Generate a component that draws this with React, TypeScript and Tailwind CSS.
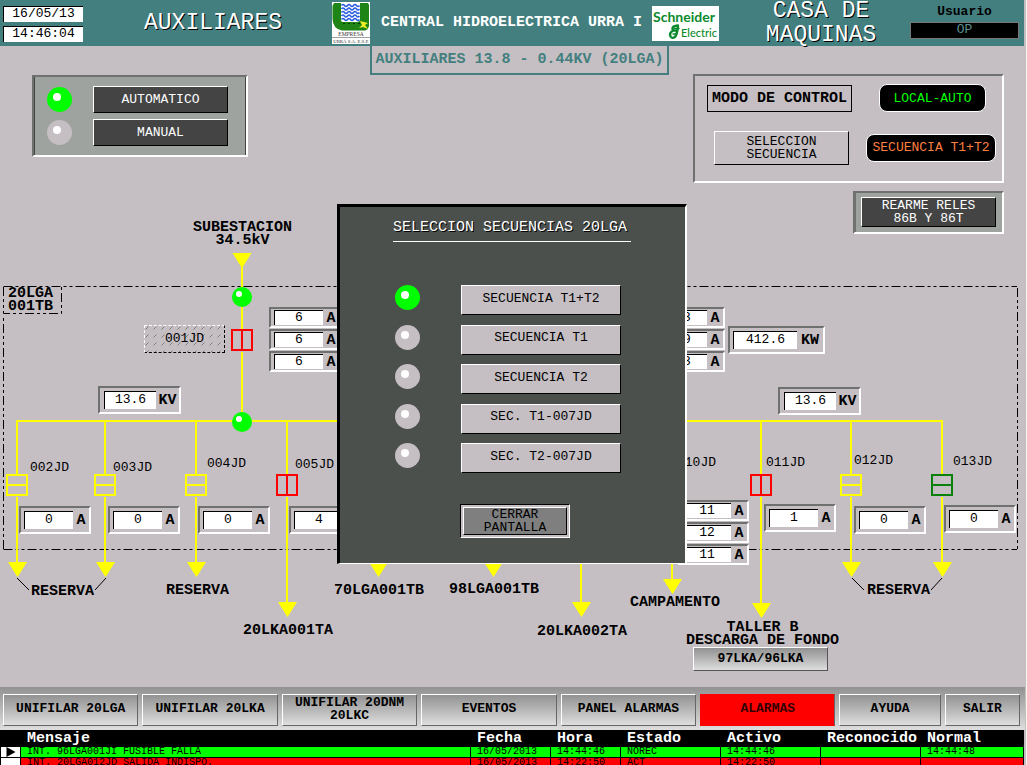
import React from 'react';
import clsx from 'clsx';

const HEADER_HEIGHT = 46;

/** Places a diagram node; y counts from the top of the screen. */
const at = (x: number, y: number) => ({ left: x, top: y - HEADER_HEIGHT });

const RAISED = 'border border-t-white border-l-white border-r-black border-b-black';
const SUNKEN_FRAME = 'border-2 border-t-[#6f716f] border-l-[#6f716f] border-r-white border-b-white';

function Lamp({ on = false }: { on?: boolean }) {
  return (
    <svg className="size-[25px] shrink-0" viewBox="0 0 25 25" aria-hidden="true">
      <circle cx="12.5" cy="12.5" r="12.5" fill={on ? '#00ff00' : '#c5bfc3'} />
      <circle cx="10" cy="10" r="4" fill="#fff" />
    </svg>
  );
}

/* ---------- header ---------- */

function UrraLogo() {
  return (
    <svg className="ml-[49px] h-[42px] w-[38px] shrink-0" viewBox="0 0 38 42" role="img" aria-label="Empresa Urrá">
      <rect width="38" height="42" fill="#fff" />
      <path d="M2 1H9V19H28V1H36L37 3V24Q36 28 33 28.500H10Q1 27 0.500 17V4Z" fill="#1e8416" />
      <path d="M9 1H28V18Q27 20 25 20H12Q9 20 9 18Z" fill="#fff" />
      <g fill="none" stroke="#2d5fe0" strokeWidth="1.600">
        {[3.5, 7, 10.5, 14, 17.5].map((y) => (
          <path key={y} d={`M9.500 ${y}q1.500 -2 3 0t3 0t3 0t3 0t3 0t3 0`} />
        ))}
      </g>
      <path d="M11 21.500H28" stroke="#0a3a06" strokeWidth="1" strokeDasharray="2 3" />
      <path d="M28 19L36 21L33 23L36 27L31 25L27 26L30 23Z" fill="#f2ee25" />
      <text x="19" y="34" textAnchor="middle" fontSize="5.500" fontFamily="Liberation Serif, serif" fill="#333">EMPRESA</text>
      <path d="M0 35.500H38" stroke="#888" strokeWidth="0.800" />
      <text x="19" y="41" textAnchor="middle" fontSize="4.800" fontFamily="Liberation Serif, serif" fill="#333">URRÁ S.A. E.S.P.</text>
    </svg>
  );
}

function SchneiderLogo() {
  return (
    <svg className="ml-[10px] h-[35px] w-[67px] shrink-0" viewBox="0 0 67 35" role="img" aria-label="Schneider Electric">
      <rect width="67" height="35" fill="#fff" />
      <text x="1" y="16" fontSize="14" fontWeight="700" fontFamily="Lato, sans-serif" fill="#0b8a2c">Schneider</text>
      <text x="29" y="31" fontSize="11" fontWeight="500" fontFamily="Lato, sans-serif" fill="#0b8a2c">Electric</text>
      <g fill="none" stroke="#0b8a2c" strokeLinecap="round">
        <path d="M26 19.500Q20 20 20.500 23Q21 25 24 24.500M20.500 25Q17 27 18.500 30.500Q20 33 23 31Q25 28 26 21" strokeWidth="2.400" />
        <path d="M22 22.500H27M21 28H25" strokeWidth="1.400" />
      </g>
    </svg>
  );
}

const TITLE = 'text-center text-[23px] leading-6 text-white [text-shadow:1px_1px_0_#000]';

function Header() {
  return (
    <header className="mr-0.5 flex h-[46px] items-center bg-[#437f7f]">
      <div className="ml-[3px] flex w-20 shrink-0 flex-col gap-1 pt-0.5 text-center">
        <time className="h-4 border-t border-l border-black bg-white leading-[13px]">16/05/13</time>
        <time className="h-4 border-t border-l border-black bg-white leading-[13px]">14:46:04</time>
      </div>
      <h1 className={clsx(TITLE, 'ml-[60px] w-[140px]')}>AUXILIARES</h1>
      <UrraLogo />
      <p className="ml-[11px] shrink-0 text-[15px] leading-4 font-bold whitespace-nowrap text-white">
        CENTRAL HIDROELECTRICA URRA I
      </p>
      <SchneiderLogo />
      <h2 className={clsx(TITLE, 'ml-[42px] w-[120px]')}>CASA DE MAQUINAS</h2>
      <div className="mr-[5px] ml-auto w-[109px] self-start pt-[5px] text-center">
        <p className="h-[17px] leading-[14px] font-bold">Usuario</p>
        <p className="h-[17px] border border-[#777] bg-black leading-[14px] text-[#5a8f8f]">OP</p>
      </div>
    </header>
  );
}

/* ---------- control panels ---------- */

const DARK_BUTTON = clsx(RAISED, 'w-[135px] bg-[#444] text-center leading-[13px] text-white');

function ModePanel() {
  return (
    <section className={clsx(SUNKEN_FRAME, 'mt-[29px] w-[216px] bg-[#9fa39f] shadow-[inset_1px_0_#444,inset_-1px_0_#444]')}>
      <div className="flex flex-col gap-1.5 py-[9px] pl-[13px]">
        <div className="flex items-center gap-[21px]">
          <Lamp on />
          <button className={clsx(DARK_BUTTON, 'h-[27px]')}>AUTOMATICO</button>
        </div>
        <div className="flex items-center gap-[21px]">
          <Lamp />
          <button className={clsx(DARK_BUTTON, 'h-[27px]')}>MANUAL</button>
        </div>
      </div>
    </section>
  );
}

function ControlPanel() {
  return (
    <div className="mt-7 ml-auto flex w-[311px] flex-col items-end gap-2">
      <section className={clsx(SUNKEN_FRAME, 'flex h-[109px] w-full flex-col gap-[19px] py-2')}>
        <div className="flex items-center justify-between pr-4 pl-3">
          <p className="h-[27px] w-[145px] border border-black text-center text-[15px] leading-[25px] font-bold">
            MODO DE CONTROL
          </p>
          <p className="h-7 w-[107px] rounded-lg border border-white bg-black text-center leading-[27px] text-[#00ff00]">
            LOCAL-AUTO
          </p>
        </div>
        <div className="flex items-center justify-between pr-1.5 pl-[19px]">
          <button className={clsx(RAISED, 'h-[34px] w-[135px] text-center leading-[13px]')}>
            SELECCION
            <br />
            SECUENCIA
          </button>
          <p className="h-7 w-[130px] rounded-lg border border-white bg-black text-center leading-[25px] text-[#ff7f3f]">
            SECUENCIA T1+T2
          </p>
        </div>
      </section>
      <section className={clsx(SUNKEN_FRAME, 'flex h-[43px] w-[151px] justify-center bg-[#9fa39f] pt-1 shadow-[inset_1px_0_#6f716f]')}>
        <button className={clsx(DARK_BUTTON, 'h-[30px]')}>
          REARME RELES
          <br />
          86B Y 86T
        </button>
      </section>
    </div>
  );
}

/* ---------- single-line diagram ---------- */

type Feeder = {
  x: number;
  arrowY: number;
  breaker?: { color: string; closed: boolean };
};

const YELLOW = '#ffff00';
const open = { color: YELLOW, closed: false };
const tripped = { color: '#ff0000', closed: true };

const feeders: Feeder[] = [
  { x: 17, arrowY: 562, breaker: open },
  { x: 105, arrowY: 562, breaker: open },
  { x: 196, arrowY: 562, breaker: open },
  { x: 287, arrowY: 602, breaker: tripped },
  { x: 378, arrowY: 562 },
  { x: 493, arrowY: 562 },
  { x: 581, arrowY: 602 },
  { x: 672, arrowY: 579 },
  { x: 761, arrowY: 603, breaker: tripped },
  { x: 851, arrowY: 562, breaker: open },
  { x: 942, arrowY: 562, breaker: { color: '#0a800a', closed: false } },
];

const Arrow = ({ x, y }: { x: number; y: number }) => (
  <path d={`M${x - 9.5} ${y}h19l-7.500 12l-2 3l-2 -3z`} fill={YELLOW} />
);

const Breaker = ({ x, y, color, closed }: { x: number; y: number; color: string; closed: boolean }) => (
  <g fill="#c5bfc3" stroke={color} strokeWidth="2">
    <rect x={x - 10} y={y - 10} width="20" height="20" />
    <path d={closed ? `M${x} ${y - 10}v20` : `M${x - 10} ${y}h20`} />
    <path d={`M${x - 2} ${y + 11.5}h4`} stroke="#c5bfc3" strokeWidth="1" />
  </g>
);

const Node = ({ x, y }: { x: number; y: number }) => (
  <g>
    <circle cx={x} cy={y} r="10" fill="#00ff00" />
    <circle cx={x - 3} cy={y - 3} r="3" fill="#fff" />
  </g>
);

function Wiring() {
  return (
    <svg className="absolute top-0 left-0 h-[641px] w-[1024px]" viewBox="0 46 1024 641" aria-hidden="true">
      <g fill="none" stroke="#000" strokeDasharray="9 3 3 3 3 3">
        <path d="M3.500 286.500H1017" />
        <path d="M1017.500 288V549" />
        <path d="M3.500 549.500H1017" />
        <path d="M3.500 549V315" />
        <path d="M3.500 287V313.500H61.500V287" />
      </g>
      <g stroke={YELLOW} strokeWidth="2" fill="none">
        <path d="M242 266V421" />
        <path d="M16 421H943" />
        {feeders.map((f) => (
          <path key={f.x} d={`M${f.x} 421V${f.arrowY + 2}`} />
        ))}
      </g>
      <Arrow x={242} y={253} />
      {feeders.map((f) => (
        <g key={f.x}>
          <Arrow x={f.x + 0.5} y={f.arrowY} />
          {f.breaker && <Breaker x={f.x} y={485} {...f.breaker} />}
        </g>
      ))}
      <Breaker x={242} y={340} {...tripped} />
      <Node x={242} y={297} />
      <Node x={242} y={422} />
      <path d="M17 578L29 590M106 578L95 590M852 578L864 590M942 578L931 590" stroke="#000" fill="none" />
    </svg>
  );
}

const breakerNames = [
  { text: '002JD', x: 30, y: 461 },
  { text: '003JD', x: 113, y: 461 },
  { text: '004JD', x: 207, y: 457 },
  { text: '005JD', x: 295, y: 458 },
  { text: '010JD', x: 677, y: 456 },
  { text: '011JD', x: 766, y: 456 },
  { text: '012JD', x: 854, y: 454 },
  { text: '013JD', x: 953, y: 455 },
];

const loadNames = [
  { text: 'SUBESTACION\n34.5kV', x: 193, y: 221 },
  { text: '20LGA\n001TB', x: 8, y: 287 },
  { text: 'RESERVA', x: 31, y: 585 },
  { text: 'RESERVA', x: 166, y: 584 },
  { text: '20LKA001TA', x: 243, y: 624 },
  { text: '70LGA001TB', x: 334, y: 584 },
  { text: '98LGA001TB', x: 449, y: 583 },
  { text: '20LKA002TA', x: 537, y: 625 },
  { text: 'CAMPAMENTO', x: 630, y: 596 },
  { text: 'TALLER B\nDESCARGA DE FONDO', x: 686, y: 621 },
  { text: 'RESERVA', x: 867, y: 584 },
];

type Reading = { value: string; unit: string; x: number; y: number; compact?: boolean };

const readings: Reading[] = [
  { value: '6', unit: 'A', x: 269, y: 307, compact: true },
  { value: '6', unit: 'A', x: 269, y: 329, compact: true },
  { value: '6', unit: 'A', x: 269, y: 351, compact: true },
  { value: '13', unit: 'A', x: 653, y: 307, compact: true },
  { value: '19', unit: 'A', x: 653, y: 329, compact: true },
  { value: '13', unit: 'A', x: 653, y: 351, compact: true },
  { value: '11', unit: 'A', x: 677, y: 500, compact: true },
  { value: '12', unit: 'A', x: 677, y: 522, compact: true },
  { value: '11', unit: 'A', x: 677, y: 544, compact: true },
  { value: '412.6', unit: 'KW', x: 728, y: 326 },
  { value: '13.6', unit: 'KV', x: 98, y: 386 },
  { value: '13.6', unit: 'KV', x: 778, y: 387 },
  { value: '0', unit: 'A', x: 19, y: 506 },
  { value: '0', unit: 'A', x: 108, y: 506 },
  { value: '0', unit: 'A', x: 198, y: 506 },
  { value: '4', unit: 'A', x: 289, y: 506 },
  { value: '1', unit: 'A', x: 764, y: 504 },
  { value: '0', unit: 'A', x: 854, y: 506 },
  { value: '0', unit: 'A', x: 944, y: 505 },
];

function Readout({ value, unit, x, y, compact }: Reading) {
  return (
    <div
      className={clsx(
        SUNKEN_FRAME,
        'absolute flex bg-[#c5bfc3]',
        compact ? 'h-[21px] pt-px' : 'h-7 pt-[3px]',
        unit === 'A' && 'w-[72px] pl-[3px]',
        unit === 'KV' && 'w-[83px] pl-1',
        unit === 'KW' && 'w-[97px] pl-[3px]',
      )}
      style={at(x, y)}
    >
      <output
        className={clsx(
          'shrink-0 border-t border-l border-black bg-white text-center',
          compact ? 'h-[15px] leading-[13px]' : 'h-[18px] leading-4',
          unit === 'A' && 'w-[49px]',
          unit === 'KV' && 'w-[52px]',
          unit === 'KW' && 'w-16',
        )}
      >
        {value}
      </output>
      <span className={clsx('grow text-center text-[15px] font-bold', compact ? 'leading-[17px]' : 'leading-5')}>{unit}</span>
    </div>
  );
}

const METAL = 'bg-linear-to-b from-[#929292] to-[#dedede]';

function Diagram() {
  return (
    <div className="absolute inset-0">
      <Wiring />
      {breakerNames.map((l) => (
        <span key={l.text} className="absolute leading-[13px]" style={at(l.x, l.y)}>
          {l.text}
        </span>
      ))}
      {loadNames.map((l) => (
        <span
          key={`${l.text}${l.x}`}
          className="absolute text-center text-[15px] leading-[13px] font-bold whitespace-pre"
          style={at(l.x, l.y)}
        >
          {l.text}
        </span>
      ))}
      {readings.map((r) => (
        <Readout key={`${r.x}-${r.y}`} {...r} />
      ))}
      <button
        className="absolute h-7 w-[81px] border border-dashed border-t-white border-r-black border-b-black border-l-white pb-0.5 text-center leading-[13px]"
        style={at(144, 325)}
      >
        <svg className="absolute inset-0 size-full" aria-hidden="true">
          <pattern id="hatch" width="8" height="8" patternUnits="userSpaceOnUse">
            <path d="M0.500 3.500L3.500 0.500" stroke="#7d7d7d" />
          </pattern>
          <rect width="100%" height="100%" fill="url(#hatch)" />
        </svg>
        <span className="relative">001JD</span>
      </button>
      <button
        className={clsx(METAL, 'absolute h-6 w-[135px] border border-t-white border-r-[#555] border-b-[#555] border-l-white text-center leading-5 font-bold')}
        style={at(693, 647)}
      >
        97LKA/96LKA
      </button>
    </div>
  );
}

/* ---------- sequence dialog ---------- */

const sequences = ['SECUENCIA T1+T2', 'SECUENCIA T1', 'SECUENCIA T2', 'SEC. T1-007JD', 'SEC. T2-007JD'];

function SequenceDialog() {
  return (
    <section
      role="dialog"
      aria-labelledby="sequence-title"
      className="absolute flex h-[360px] w-[350px] flex-col border-t-[3px] border-r-2 border-b border-l-[3px] border-t-black border-r-white border-b-white border-l-black bg-[#4c504c]"
      style={at(337, 204)}
    >
      <h3
        id="sequence-title"
        className="mt-3 ml-[53px] h-[23px] w-[238px] border-b border-white text-[15px] leading-[18px] whitespace-nowrap text-white [text-shadow:1px_1px_0_#000]"
      >
        SELECCION SECUENCIAS 20LGA
      </h3>
      <ul className="mt-[43px] ml-[55px] flex h-[188px] flex-col justify-between">
        {sequences.map((name, i) => (
          <li key={name} className="flex items-start gap-[41px]">
            <Lamp on={i === 0} />
            <button className={clsx(RAISED, 'h-[30px] w-[160px] bg-[#c5bfc3] pb-1 text-center leading-[13px]')}>{name}</button>
          </li>
        ))}
      </ul>
      <div className="mt-[31px] ml-[120px] h-[34px] w-[110px] border border-t-black border-r-white border-b-white border-l-black bg-[#c5bfc3] p-0.5">
        <button className={clsx(RAISED, 'size-full bg-[#7f7f7f] pb-0.5 text-center leading-[13px]')}>
          CERRAR
          <br />
          PANTALLA
        </button>
      </div>
    </section>
  );
}

/* ---------- navigation and alarm list ---------- */

const navItems = [
  'UNIFILAR 20LGA',
  'UNIFILAR 20LKA',
  'UNIFILAR 20DNM 20LKC',
  'EVENTOS',
  'PANEL ALARMAS',
  'ALARMAS',
  'AYUDA',
  'SALIR',
];

function NavBar() {
  return (
    <nav className={clsx(METAL, 'mr-px grid h-[43px] shrink-0 grid-cols-[repeat(6,135fr)_101fr_75fr] gap-1 pt-[7px] pr-[5px] pb-1 pl-[3px]')}>
      {navItems.map((item) => (
        <button
          key={item}
          className={clsx(
            'border px-1 pb-[3px] text-center leading-[13px] font-bold',
            item === 'ALARMAS'
              ? 'border-[#ff0000] border-r-[#666] bg-[#ff0000] text-[#300]'
              : 'border-t-white border-r-[#666] border-b-[#666] border-l-white bg-linear-to-b from-[#929292] to-[#dedede]',
          )}
        >
          {item}
        </button>
      ))}
    </nav>
  );
}

const columns = [
  { name: 'Mensaje', width: 'w-[450px]' },
  { name: 'Fecha', width: 'w-[80px]' },
  { name: 'Hora', width: 'w-[70px]' },
  { name: 'Estado', width: 'w-[100px]' },
  { name: 'Activo', width: 'w-[100px]' },
  { name: 'Reconocido', width: 'w-[100px]' },
  { name: 'Normal', width: 'w-[103px]' },
];

const alarms = [
  { color: 'bg-[#00ff00]', cells: ['INT. 96LGA001JI FUSIBLE FALLA', '16/05/2013', '14:44:46', 'NOREC', '14:44:46', '', '14:44:48'] },
  { color: 'bg-[#ff0000]', cells: ['INT. 20LGA012JD SALIDA INDISPO.', '16/05/2013', '14:22:50', 'ACT', '14:22:50', '', ''] },
];

function AlarmTable() {
  return (
    <div className="mr-0.5 bg-black">
      <table className="w-full table-fixed border-separate border-spacing-0 text-left">
        <thead>
          <tr className="text-[15px] leading-4 text-white">
            <th className="w-[21px] p-0" aria-label="Selector" />
            {columns.map((c) => (
              <th key={c.name} className={clsx(c.width, 'p-0 pt-px pl-1.5 font-bold')}>
                {c.name}
              </th>
            ))}
          </tr>
        </thead>
        <tbody>
          {alarms.map((a, row) => (
            <tr key={a.cells[0]} className="text-[10px] leading-[10px]">
              <td className="border-r border-b border-l border-black bg-white p-0">
                {row === 0 && (
                  <svg className="ml-[5px] block h-2.5 w-[10px]" viewBox="0 0 10 10" aria-hidden="true">
                    <path d="M0.500 0L9.500 5L0.500 10Z" />
                  </svg>
                )}
              </td>
              {a.cells.map((cell, i) => (
                <td key={columns[i].name} className={clsx(a.color, 'h-[11px] border-r border-b border-black p-0 pl-1.5 whitespace-nowrap')}>
                  {cell}
                </td>
              ))}
            </tr>
          ))}
        </tbody>
      </table>
    </div>
  );
}

export default function App() {
  return (
    <div className="flex h-screen flex-col overflow-hidden border-r border-[#f8f4e6] bg-[#c5bfc3] font-['Liberation_Mono',monospace] text-[13px] text-black">
      <Header />
      <main className="relative min-h-[641px] shrink-0">
        <Diagram />
        <div className="relative flex items-start pr-[22px] pl-8">
          <ModePanel />
          <h2 className="ml-[122px] h-[29px] w-[299px] border-2 border-t-0 border-[#437f7f] text-center text-[15px] leading-7 font-bold whitespace-nowrap text-[#437f7f]">
            AUXILIARES 13.8 - 0.44KV (20LGA)
          </h2>
          <ControlPanel />
        </div>
        <SequenceDialog />
      </main>
      <NavBar />
      <AlarmTable />
    </div>
  );
}
